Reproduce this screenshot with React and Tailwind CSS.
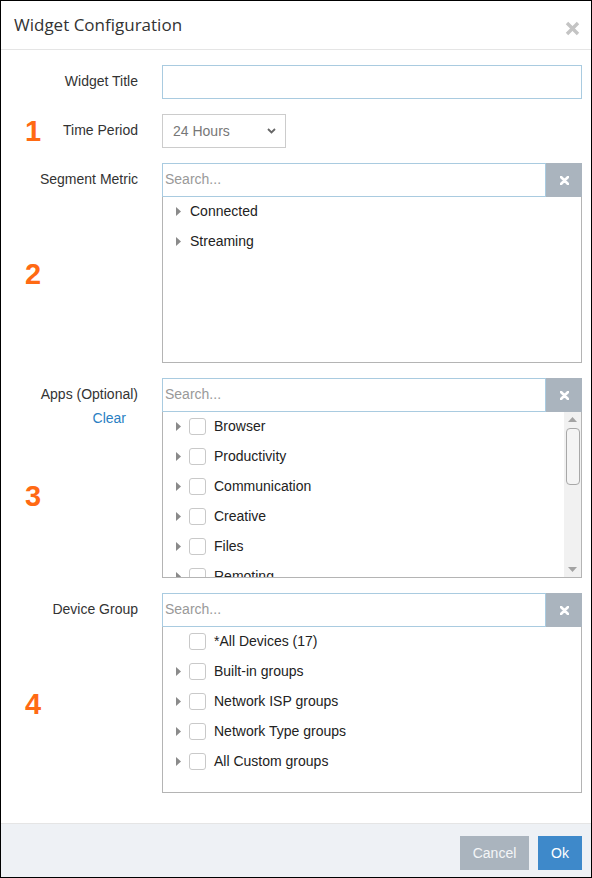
import React from "react";

const Arrow = () => (
	<svg width="5" height="9" viewBox="0 0 5 9" className="shrink-0">
		<path d="M0 0 L5 4.5 L0 9 Z" fill="#8a8a8a" />
	</svg>
);

const Box = () => <span className="w-[17px] h-[17px] shrink-0 rounded-[3px] border border-[#c9c9c9] bg-white" />;

const Num = ({ n }) => <span className="text-[29px] leading-none font-bold text-[#ff6a13]">{n}</span>;

const SearchBar = () => (
	<div className="flex h-[34px]">
		<div className="flex-1 border border-[#a9cbe0] flex items-center pl-[2px] pb-[2px] text-[14px] text-[#999]">Search...</div>
		<button className="w-[36px] bg-[#aab4be] flex items-center justify-center">
			<svg width="9" height="9" viewBox="0 0 9 9">
				<path d="M1 1 L8 8 M8 1 L1 8" stroke="#fff" strokeWidth="2.6" strokeLinecap="round" />
			</svg>
		</button>
	</div>
);

const TreeRow = ({ label, arrow = true, check = true }) => (
	<div className="h-[30px] flex items-center shrink-0 pb-[2px]">
		<span className="w-[5px] flex">{arrow && <Arrow />}</span>
		{check ? (
			<span className="ml-[8px] flex items-center gap-[8px]">
				<Box />
				<span>{label}</span>
			</span>
		) : (
			<span className="ml-[9px]">{label}</span>
		)}
	</div>
);

const Picker = ({ children, scroll }) => (
	<div className="flex flex-col">
		<SearchBar />
		<div className="h-[166px] border border-t-0 border-[#b4b4b4] flex overflow-hidden">
			<div className="flex-1 flex flex-col pl-[13px] text-[14px] text-[#222] overflow-hidden">{children}</div>
			{scroll && (
				<div className="w-[17px] bg-[#f1f1f1] flex flex-col items-center py-[5px]">
					<svg width="9" height="5" viewBox="0 0 9 5"><path d="M0 5 L4.5 0 L9 5 Z" fill="#a3a3a3" /></svg>
					<div className="mt-[6px] w-[14px] h-[57px] rounded-[4px] border border-[#a8a8a8] bg-[#f4f4f4]" />
					<div className="flex-1" />
					<svg width="9" height="5" viewBox="0 0 9 5"><path d="M0 0 L4.5 5 L9 0 Z" fill="#a3a3a3" /></svg>
				</div>
			)}
		</div>
	</div>
);

const Row = ({ label, extra, num, inline, children }) => (
	<div className="flex">
		<div className="w-[137px] shrink-0 flex flex-col">
			<div className="h-[34px] flex items-center justify-between pl-[24px]">
				<span className="pt-[2px]">{inline && <Num n={num} />}</span>
				<span className="text-[14px] text-[#333] pb-[2px]">{label}</span>
			</div>
			{extra}
			{!inline && num && (
				<div className="flex-1 flex items-center pl-[24px] pb-[12px]">
					<Num n={num} />
				</div>
			)}
		</div>
		<div className="flex-1 ml-6">{children}</div>
	</div>
);

export default function App() {
	return (
		<div className="w-[592px] h-[878px] border border-black bg-white flex flex-col font-['Liberation_Sans',Arial,sans-serif]">
			<div className="h-[49px] shrink-0 border-b border-[#e5e5e5] flex items-center justify-between pl-[13px] pr-[11px]">
				<h4 className="font-['Open_Sans',sans-serif] text-[17px] text-[#333]">Widget Configuration</h4>
				<svg width="15" height="15" viewBox="0 0 15 15" className="mt-[6px]">
					<path d="M2 2 L13 13 M13 2 L2 13" stroke="#c4c4c4" strokeWidth="3.4" />
				</svg>
			</div>
			<div className="flex-1 flex flex-col gap-[15px] pt-[15px] pr-[9px]">
				<Row label="Widget Title">
					<input className="w-full h-[34px] border border-[#a9cbe0] outline-none px-2 text-[14px]" />
				</Row>
				<Row label="Time Period" num="1" inline>
					<div className="w-[124px] h-[34px] border border-[#cccccc] flex items-center justify-between pl-[10px] pr-[9px] text-[14px] text-[#777]">
						<span>24 Hours</span>
						<svg width="9" height="6" viewBox="0 0 9 6"><path d="M1 1 L4.5 4.5 L8 1" stroke="#666" strokeWidth="1.8" fill="none" /></svg>
					</div>
				</Row>
				<Row label="Segment Metric" num="2">
					<Picker>
						<TreeRow label="Connected" check={false} />
						<TreeRow label="Streaming" check={false} />
					</Picker>
				</Row>
				<Row
					label="Apps (Optional)"
					num="3"
					extra={<div className="text-right pr-3 -mt-[2px] text-[14px] leading-4 text-[#2a7fc3]">Clear</div>}
				>
					<Picker scroll>
						<TreeRow label="Browser" />
						<TreeRow label="Productivity" />
						<TreeRow label="Communication" />
						<TreeRow label="Creative" />
						<TreeRow label="Files" />
						<TreeRow label="Remoting" />
					</Picker>
				</Row>
				<Row label="Device Group" num="4">
					<Picker>
						<TreeRow label="*All Devices (17)" arrow={false} />
						<TreeRow label="Built-in groups" />
						<TreeRow label="Network ISP groups" />
						<TreeRow label="Network Type groups" />
						<TreeRow label="All Custom groups" />
					</Picker>
				</Row>
			</div>
			<div className="h-[54px] shrink-0 border-t border-[#e5e5e5] bg-[#eef1f5] flex justify-end items-start gap-[9px] pt-[12px] pr-[9px]">
				<button className="h-[34px] w-[69px] bg-[#aab4be] text-[#f4f6f8] text-[14px]">Cancel</button>
				<button className="h-[34px] w-[44px] bg-[#3e89ca] text-white text-[14px]">Ok</button>
			</div>
		</div>
	);
}
